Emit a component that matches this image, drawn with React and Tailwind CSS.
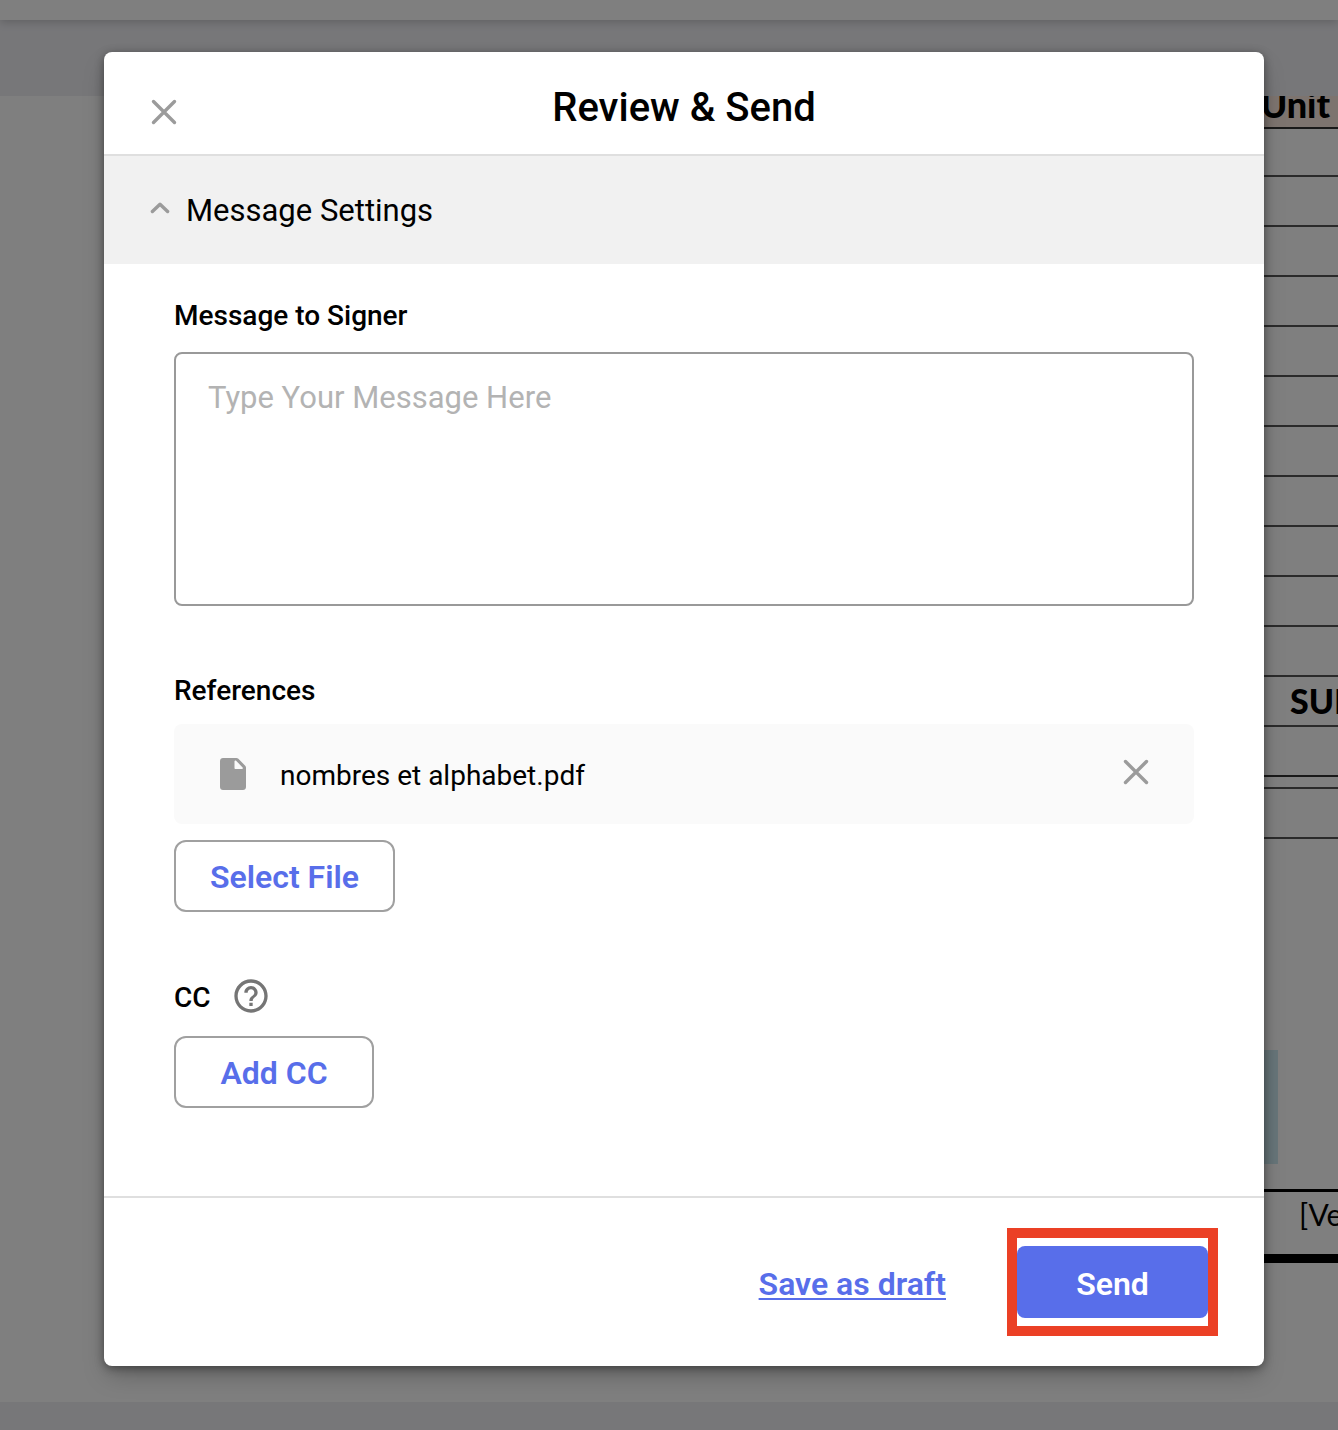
import { useState } from "react";

const itemRows = Array.from({ length: 10 }, (_, i) => i);

function CloseIcon() {
  return (
    <svg viewBox="0 0 28 28" className="size-7" fill="none" stroke="#9b9b9b" strokeWidth="3.4" strokeLinecap="round">
      <path d="M3.5 3.5l21 21M24.5 3.5l-21 21" />
    </svg>
  );
}

function ChevronIcon({ open }) {
  return (
    <svg
      viewBox="0 0 20 20"
      className={open ? "size-5" : "size-5 rotate-180"}
      fill="none"
      stroke="#9b9b9b"
      strokeWidth="3.4"
      strokeLinecap="round"
      strokeLinejoin="round"
    >
      <path d="M2.400 11.500L10 4.200l7.600 7.300" />
    </svg>
  );
}

function FileIcon() {
  return (
    <svg viewBox="0 0 26 32" className="h-8 w-[26px]">
      <path
        fill="#9b9b9b"
        fillRule="evenodd"
        d="M3 0h13.400c.8 0 1.400.3 2 .8l6.600 6.700c.6.6 1 1.200 1 2V29c0 1.700-1.300 3-3 3H3c-1.700 0-3-1.300-3-3V3c0-1.700 1.300-3 3-3zM14.500 3.300V10c0 .6.400 1 1 1h6.500c.8 0 1.200-.8.600-1.400l-6.500-6.900c-.6-.6-1.600-.2-1.600.6z"
      />
    </svg>
  );
}

function HelpIcon() {
  return (
    <svg viewBox="0 0 24 24" className="size-10" fill="#757575">
      <path d="M11 18h2v-2h-2v2zm1-16C6.480 2 2 6.480 2 12s4.480 10 10 10 10-4.480 10-10S17.520 2 12 2zm0 18c-4.410 0-8-3.590-8-8s3.590-8 8-8 8 3.590 8 8-3.590 8-8 8zm0-14c-2.210 0-4 1.790-4 4h2c0-1.100.9-2 2-2s2 .9 2 2c0 2-3 1.750-3 5h2c0-2.250 3-2.500 3-5 0-2.210-1.790-4-4-4z" />
    </svg>
  );
}

function DocumentPage() {
  return (
    <div className="[grid-area:1/1] flex flex-col min-w-0 overflow-hidden bg-[#eeeef3] font-['Lato',sans-serif] text-black">
      <div className="h-5 shrink-0 bg-white shadow-[0_2px_10px_rgba(0,0,0,0.2)]" />
      <div className="mt-19 mb-7 flex flex-1 flex-col items-end bg-white">
        <div className="w-32 overflow-hidden">
          <table className="w-full table-fixed border-collapse whitespace-nowrap">
            <thead>
              <tr>
                <th className="h-8 border-b-2 border-[#333] bg-[#fae8de] p-0 pr-2 text-right align-top text-4xl leading-4 font-black">
                  Unit
                </th>
              </tr>
            </thead>
            <tbody>
              <tr>
                <td className="h-12 border-b-2 border-[#555] p-0" />
              </tr>
              {itemRows.map((row) => (
                <tr key={row}>
                  <td className="h-[50px] border-b-2 border-[#555] p-0" />
                </tr>
              ))}
              <tr>
                <td className="h-[50px] border-b-2 border-[#555] p-0 pl-20 text-[34px] leading-10 font-black">SUB</td>
              </tr>
              <tr>
                <td className="h-[50px] border-b-2 border-[#333] p-0" />
              </tr>
              <tr>
                <td className="h-3 border-b-2 border-[#555] p-0" />
              </tr>
              <tr>
                <td className="h-[50px] border-b-2 border-[#555] p-0" />
              </tr>
            </tbody>
          </table>
          <div className="mt-[211px] h-[114px] w-[68px] bg-[#cfeaf2]" />
          <div className="mt-[25px] h-[74px] border-t-3 border-b-9 border-black pl-[89px] text-3xl leading-11 whitespace-nowrap">
            [Ve
          </div>
        </div>
      </div>
    </div>
  );
}

export default function App() {
  const [open, setOpen] = useState(true);
  const [message, setMessage] = useState("");
  const [files, setFiles] = useState(["nombres et alphabet.pdf"]);

  const removeFile = (name) => {
    setFiles((prev) => prev.filter((file) => file !== name));
  };

  return (
    <div className="grid min-h-screen grid-cols-1 font-['Roboto',sans-serif] text-black">
      <DocumentPage />

      <div className="[grid-area:1/1] z-10 flex items-start bg-black/50 pt-13 pr-[74px] pb-16 pl-[104px]">
        <div
          role="dialog"
          aria-labelledby="dialog-title"
          className="flex-1 rounded-lg bg-white shadow-[0_2px_10px_rgba(0,0,0,0.4),0_12px_24px_-4px_rgba(0,0,0,0.25)]"
        >
          <header className="grid grid-cols-[1fr_auto_1fr] border-b-2 border-[#dfdfdf] px-[46px] pt-8 pb-[22px]">
            <button aria-label="Close" className="flex h-12 items-center justify-self-start pt-2">
              <CloseIcon />
            </button>
            <h1 id="dialog-title" className="text-[40px] leading-12 font-medium">
              Review &amp; Send
            </h1>
          </header>

          <button
            aria-expanded={open}
            onClick={() => setOpen(!open)}
            className="flex h-[108px] w-full items-center gap-4 bg-[#f1f1f1] px-[46px] text-[31px]"
          >
            <ChevronIcon open={open} />
            <span className="pt-0.5">Message Settings</span>
          </button>

          {open && (
            <div className="px-[70px] pt-8 pb-22">
              <label htmlFor="message" className="block text-[28px] leading-10 font-medium">
                Message to Signer
              </label>
              <textarea
                id="message"
                className="mt-4 block h-[254px] w-full resize-none rounded-lg border-2 border-[#999] px-8 py-6 text-[31px] leading-10 placeholder:text-[#b3b3b3]"
                placeholder="Type Your Message Here"
                value={message}
                onChange={(e) => setMessage(e.target.value)}
              />

              <h2 className="mt-16 pt-px text-[28px] leading-10 font-medium">References</h2>
              <ul className="mt-[13px]">
                {files.map((file) => (
                  <li key={file} className="flex h-[100px] items-center rounded-lg bg-[#fafafa] pr-11 pl-[46px]">
                    <FileIcon />
                    <span className="ml-[34px] flex-1 pt-1 text-[28px]">{file}</span>
                    <button aria-label={`Remove ${file}`} className="pb-1" onClick={() => removeFile(file)}>
                      <CloseIcon />
                    </button>
                  </li>
                ))}
              </ul>
              <button className="mt-4 h-18 w-[221px] rounded-xl border-2 border-[#a0a0a0] pt-0.5 text-[32px] font-semibold text-[#586eea]">
                Select File
              </button>

              <div className="mt-16 flex items-start gap-5">
                <h2 className="pt-0.5 text-[28px] leading-10 font-medium">CC</h2>
                <button aria-label="About CC">
                  <HelpIcon />
                </button>
              </div>
              <button className="mt-[18px] h-18 w-[200px] rounded-xl border-2 border-[#a0a0a0] pt-0.5 text-[32px] font-semibold text-[#586eea]">
                Add CC
              </button>
            </div>
          )}

          <footer className="flex items-center justify-end gap-[61px] border-t-2 border-[#dfdfdf] px-[46px] py-[30px]">
            <a
              href="#draft"
              className="pt-1 text-[32px] font-semibold text-[#586eea] underline decoration-2 underline-offset-3"
            >
              Save as draft
            </a>
            <div className="flex h-[108px] w-[211px] items-center border-10 border-[#eb4025]">
              <button className="h-18 w-full rounded-lg bg-[#586eea] pt-1 text-[32px] font-semibold text-white">
                Send
              </button>
            </div>
          </footer>
        </div>
      </div>
    </div>
  );
}
